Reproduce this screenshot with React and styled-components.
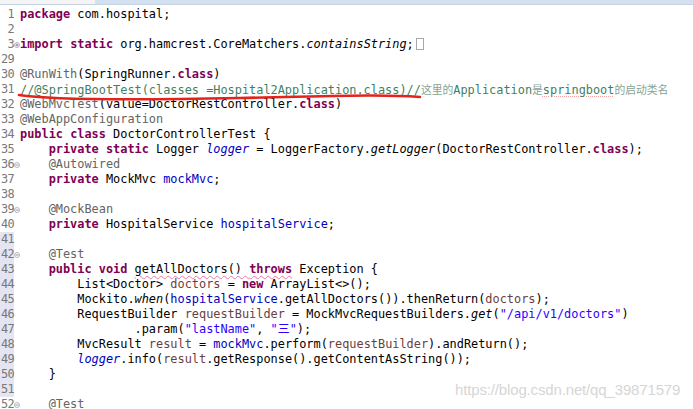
import React from "react";
import styled, { createGlobalStyle, css } from "styled-components";

const Global = createGlobalStyle`
  html, body { margin: 0; padding: 0; background: #ffffff; }
  body { width: 693px; height: 409px; overflow: hidden; }
`;

// each line: [number, fold marker, tokens]
// token kinds: k keyword, a annotation, s string, f field, sf static field,
// sm static method, l local var, c comment, z cjk comment, p plain
const LINES = [
  [1, null, [["k", "package"], ["p", " com.hospital;"]]],
  [2, null, []],
  [3, "plus", [["k", "import"], ["p", " "], ["k", "static"], ["p", " org.hamcrest.CoreMatchers."], ["sm", "containsString"], ["p", ";"], ["box", ""]]],
  [29, null, []],
  [30, null, [["a", "@RunWith"], ["p", "(SpringRunner."], ["k", "class"], ["p", ")"]]],
  [31, null, [
    ["c", "//@SpringBootTest(classes =Hospital2Application.class)//"],
    ["z", "这里的"], ["c", "Application"], ["z", "是"], ["cs", "springboot"], ["z", "的启动类名"],
  ]],
  [32, null, [["a", "@WebMvcTest"], ["p", "(value=DoctorRestController."], ["k", "class"], ["p", ")"]]],
  [33, null, [["a", "@WebAppConfiguration"]]],
  [34, null, [["k", "public"], ["p", " "], ["k", "class"], ["p", " DoctorControllerTest {"]]],
  [35, null, [["p", "    "], ["k", "private"], ["p", " "], ["k", "static"], ["p", " Logger "], ["sf", "logger"], ["p", " = LoggerFactory."], ["sm", "getLogger"], ["p", "(DoctorRestController."], ["k", "class"], ["p", ");"]]],
  [36, "minus", [["p", "    "], ["a", "@Autowired"]]],
  [37, null, [["p", "    "], ["k", "private"], ["p", " MockMvc "], ["f", "mockMvc"], ["p", ";"]]],
  [38, null, []],
  [39, "minus", [["p", "    "], ["a", "@MockBean"]]],
  [40, null, [["p", "    "], ["k", "private"], ["p", " HospitalService "], ["f", "hospitalService"], ["p", ";"]]],
  [41, null, []],
  [42, "minus", [["p", "    "], ["a", "@Test"]]],
  [43, null, [["p", "    "], ["k", "public"], ["p", " "], ["k", "void"], ["p", " "], ["ps", "getAllDoctors() "], ["ks", "throws"], ["p", " Exception {"]]],
  [44, null, [["p", "        List<Doctor> "], ["l", "doctors"], ["p", " = "], ["k", "new"], ["p", " ArrayList<>();"]]],
  [45, null, [["p", "        Mockito."], ["sm", "when"], ["p", "("], ["f", "hospitalService"], ["p", ".getAllDoctors()).thenReturn("], ["l", "doctors"], ["p", ");"]]],
  [46, null, [["p", "        RequestBuilder "], ["l", "requestBuilder"], ["p", " = MockMvcRequestBuilders."], ["sm", "get"], ["p", "("], ["s", "\"/api/v1/doctors\""], ["p", ")"]]],
  [47, null, [["p", "                .param("], ["s", "\"lastName\""], ["p", ", "], ["s", "\"三\""], ["p", ");"]]],
  [48, null, [["p", "        MvcResult "], ["l", "result"], ["p", " = "], ["f", "mockMvc"], ["p", ".perform("], ["l", "requestBuilder"], ["p", ").andReturn();"]]],
  [49, null, [["p", "        "], ["sf", "logger"], ["p", ".info("], ["l", "result"], ["p", ".getResponse().getContentAsString());"]]],
  [50, null, [["p", "    }"]]],
  [51, null, []],
  [52, "minus", [["p", "    "], ["a", "@Test"]]],
];

const MARKED = [41, 42, 43, 44, 45, 46, 47, 48, 49, 50, 51];

const Page = styled.div`
  position: relative;
  width: 693px;
  height: 409px;
  background: #ffffff;
  overflow: hidden;
`;

const TabEdge = styled.div`
  display: flex;
  height: 4px;
  border-bottom: 1px solid #c5d3e4;
`;

const TabPart = styled.div`
  width: ${(p) => p.$w || "auto"};
  flex: ${(p) => (p.$grow ? 1 : "none")};
  background: ${(p) => p.$bg};
`;

const Editor = styled.div`
  display: flex;
  flex-direction: column;
  padding-top: 2px;
  font-family: "DejaVu Sans Mono", "Liberation Mono", "Noto Sans CJK SC", monospace;
  font-size: 11.9px;
`;

const Row = styled.div`
  display: flex;
  height: 15px;
  line-height: 15px;
  white-space: pre;
`;

const Num = styled.div`
  width: 14px;
  text-align: right;
  color: #787878;
  background: ${(p) => (p.$mark ? "#e4e4f2" : "transparent")};
  letter-spacing: -0.6px;
`;

const Fold = styled.div`
  width: 6px;
  display: flex;
  align-items: center;
  justify-content: center;
`;

const Code = styled.div`
  color: #000000;
`;

const kinds = {
  k: css`color: #7f0055; font-weight: bold;`,
  ks: css`color: #7f0055; font-weight: bold;`,
  a: css`color: #646464;`,
  s: css`color: #2a00ff;`,
  f: css`color: #0000c0;`,
  sf: css`color: #0000c0; font-style: italic;`,
  sm: css`font-style: italic;`,
  l: css`color: #6a3e3e;`,
  c: css`color: #3f7f5f;`,
  cs: css`color: #3f7f5f;`,
  z: css`
    color: #86a394;
    font-family: "Noto Sans CJK SC", sans-serif;
    font-size: 10.8px;
  `,
  p: css``,
  ps: css``,
};

const Token = styled.span`
  ${(p) => kinds[p.$kind]}
  ${(p) =>
    p.$squiggle &&
    css`
      text-decoration: underline ${p.$style} ${p.$squiggle};
      text-decoration-thickness: 1px;
      text-underline-offset: 2px;
    `}
`;

const FoldBox = styled.span`
  display: inline-block;
  width: 6px;
  height: 10px;
  margin-left: 2px;
  vertical-align: -2px;
  border: 1px solid #a8a8a8;
`;

const Ink = styled.svg`
  position: absolute;
  left: 0;
  top: 0;
  pointer-events: none;
`;

const Watermark = styled.div`
  position: absolute;
  left: 455px;
  top: 381px;
  font-family: "Liberation Sans", Arial, sans-serif;
  font-size: 15px;
  color: #d6d6d6;
  letter-spacing: -0.15px;
  white-space: nowrap;
`;

function FoldIcon({ type }) {
  if (!type) return null;
  return (
    <svg width="6" height="6" viewBox="0 0 6 6">
      <circle cx="3" cy="3" r="2.5" fill="#ffffff" stroke="#9aa6b8" strokeWidth="0.8" />
      <line x1="1.5" y1="3" x2="4.5" y2="3" stroke="#6c7a90" strokeWidth="0.8" />
      {type === "plus" && <line x1="3" y1="1.5" x2="3" y2="4.5" stroke="#6c7a90" strokeWidth="0.8" />}
    </svg>
  );
}

function squiggleFor(kind) {
  if (kind === "cs") return ["#f5a3a3", "dotted"];
  if (kind === "ps" || kind === "ks") return ["#e879a8", "wavy"];
  return [null, null];
}

export default function App() {
  return (
    <Page>
      <Global />
      <TabEdge>
        <TabPart $w="95px" $bg="#f4f4f4" />
        <TabPart $grow $bg="#d4e1f0" />
      </TabEdge>
      <Editor>
        {LINES.map(([n, fold, tokens]) => (
          <Row key={n}>
            <Num $mark={MARKED.includes(n)}>{n}</Num>
            <Fold>
              <FoldIcon type={fold} />
            </Fold>
            <Code>
              {tokens.map(([kind, text], i) => {
                if (kind === "box") return <FoldBox key={i} />;
                const [color, style] = squiggleFor(kind);
                return (
                  <Token key={i} $kind={kind} $squiggle={color} $style={style}>
                    {text}
                  </Token>
                );
              })}
            </Code>
          </Row>
        ))}
      </Editor>
      <Ink width="693" height="409" viewBox="0 0 693 409">
        <path
          d="M19 95 C 50 100, 140 100, 240 98 S 380 94, 420 97"
          fill="none"
          stroke="#e3231c"
          strokeWidth="2.6"
          strokeLinecap="round"
        />
      </Ink>
      <Watermark>https://blog.csdn.net/qq_39871579</Watermark>
    </Page>
  );
}
